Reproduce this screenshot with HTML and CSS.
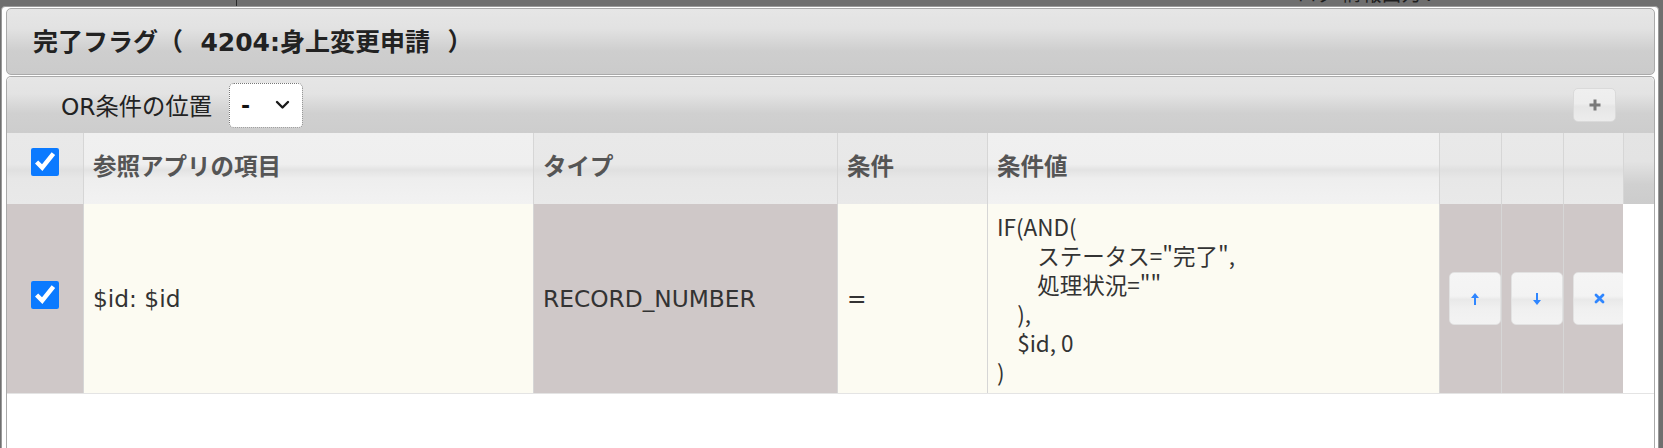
FILE: index.html
```html
<!DOCTYPE html>
<html lang="ja">
<head>
    <meta charset="UTF-8">
    <meta name="viewport" content="width=device-width, initial-scale=1.0">
    <title>完了フラグ</title>
    <link rel="stylesheet" href="styles.css">
</head>
<body>
    <!-- page behind the modal overlay -->
    <div class="backdrop">
        <div class="backdrop-side"></div>
        <div class="backdrop-main">
            <span class="backdrop-text">ログ 情報出力 :</span>
        </div>
    </div>

    <div class="dialog">
        <div class="dialog-titlebar">
            <span class="dialog-title">完了フラグ（&nbsp; 4204:身上変更申請 &nbsp;）</span>
        </div>

        <div class="dialog-content">
            <div class="toolbar">
                <span class="or-label">OR条件の位置</span>
                <div class="or-select">
                    <span>-</span>
                    <svg width="15" height="10" viewBox="0 0 15 10">
                        <polyline points="2,2 7.5,7.5 13,2" fill="none" stroke="#1a1a1a" stroke-width="2.4" stroke-linecap="round" stroke-linejoin="round"/>
                    </svg>
                </div>
                <button class="add-btn" type="button">
                    <svg width="14" height="14" viewBox="0 0 14 14">
                        <path d="M7 1.5v11M1.5 7h11" stroke="#7a7a7a" stroke-width="3"/>
                    </svg>
                </button>
            </div>

            <div class="grid-row grid-head">
                <div class="cell cell-check shade"><input type="checkbox" checked></div>
                <div class="cell light">参照アプリの項目</div>
                <div class="cell shade">タイプ</div>
                <div class="cell shade">条件</div>
                <div class="cell light">条件値</div>
                <div class="cell shade"></div>
                <div class="cell shade"></div>
                <div class="cell shade"></div>
                <div class="cell gutter"></div>
            </div>

            <div class="grid-row grid-body">
                <div class="cell cell-check ro"><input type="checkbox" checked></div>
                <div class="cell ed">$id: $id</div>
                <div class="cell ro">RECORD_NUMBER</div>
                <div class="cell ed">=</div>
                <div class="cell ed formula"><pre>IF(AND(
        ステータス="完了",
        処理状況=""
    ),
    $id, 0
)</pre></div>
                <div class="cell ro cell-btn">
                    <button class="row-btn" type="button" title="上へ">
                        <svg width="10" height="14" viewBox="0 0 10 14">
                            <path d="M5 1L1 6h3v7h2V6h3z" fill="#2f86ff"/>
                        </svg>
                    </button>
                </div>
                <div class="cell ro cell-btn">
                    <button class="row-btn" type="button" title="下へ">
                        <svg width="10" height="14" viewBox="0 0 10 14">
                            <path d="M5 13L1 8h3V1h2v7h3z" fill="#2f86ff"/>
                        </svg>
                    </button>
                </div>
                <div class="cell ro cell-btn">
                    <button class="row-btn" type="button" title="削除">
                        <svg width="11" height="11" viewBox="0 0 11 11">
                            <path d="M2 2l7 7M9 2l-7 7" stroke="#2f86ff" stroke-width="2.8" stroke-linecap="round"/>
                        </svg>
                    </button>
                </div>
                <div class="cell gutter-body"></div>
            </div>
        </div>
    </div>
</body>
</html>
```

FILE: styles.css
```css
body {
    margin: 0;
    height: 448px;
    overflow: hidden;
    background-color: #6f6f6f;
    font-family: "DejaVu Sans", "Noto Sans CJK JP", sans-serif;
    font-size: 23.3px;
    color: #333;
}

/* dimmed page behind the dialog */
.backdrop {
    display: flex;
    height: 6px;
    overflow: hidden;
}

.backdrop-side {
    width: 236px;
    border-right: 1px solid #2a2a2a;
}

.backdrop-main {
    flex: 1;
    padding-left: 1060px;
}

.backdrop-text {
    display: block;
    margin-top: -17px;
    font-family: "Noto Sans CJK JP", sans-serif;
    font-size: 20px;
    line-height: 20px;
    color: #1f1f1f;
}

/* modal dialog */
.dialog {
    position: absolute;
    top: 6px;
    left: 1px;
    width: 1658px;
    height: 460px;
    box-sizing: border-box;
    padding: 1px 3px 0 4px;
    background: #fff;
    border: 1px solid #9a9a9a;
    border-radius: 4px;
}

.dialog-titlebar {
    display: flex;
    align-items: center;
    height: 67px;
    box-sizing: border-box;
    padding: 0 0 4px 26px;
    border: 1px solid #aaa;
    border-radius: 5px;
    background: linear-gradient(#e6e6e6 0%, #e2e2e2 30%, #cecece 65%, #cbcbcb 100%);
}

.dialog-title {
    font-size: 25px;
    font-weight: bold;
    color: #222;
}

.dialog-content {
    margin-top: 1px;
    height: 380px;
    border: 1px solid #aaa;
    border-bottom: none;
    border-radius: 5px 5px 0 0;
}

.toolbar {
    display: flex;
    align-items: center;
    height: 56px;
    padding-left: 54px;
    padding-right: 38px;
    background: linear-gradient(#e6e6e6 0%, #e3e3e3 30%, #d0d0d0 65%, #cdcdcd 100%);
    border-radius: 5px 5px 0 0;
}

.or-label {
    color: #222;
}

.or-select {
    display: flex;
    align-items: center;
    justify-content: space-between;
    width: 74px;
    height: 45px;
    box-sizing: border-box;
    margin-left: 17px;
    padding: 0 12px 0 11px;
    background: #fff;
    border: 1px dotted #777;
    border-radius: 5px;
    font-size: 22px;
    font-weight: bold;
    color: #111;
}

.add-btn {
    display: flex;
    align-items: center;
    justify-content: center;
    width: 43px;
    height: 34px;
    margin-left: auto;
    padding: 0;
    background: linear-gradient(#efefef 0%, #ededed 45%, #e6e6e6 55%, #ececec 100%);
    border: 1px solid #dadada;
    border-radius: 5px;
}

/* grid of conditions */
.grid-row {
    display: grid;
    grid-template-columns: 76px 450px 304px 150px 452px 62px 62px 60px 31px;
}

.cell {
    box-sizing: border-box;
    display: flex;
    align-items: center;
    padding-left: 9px;
    border-left: 1px solid #d6d6d6;
    overflow: hidden;
}

.cell:first-child {
    border-left: none;
}

.cell-check {
    justify-content: center;
    padding-left: 0;
}

.cell-check input {
    width: 28px;
    height: 28px;
    margin: 0 0 6px 0;
    accent-color: #0b7aff;
}

.grid-head {
    height: 71px;
}

.grid-head .cell {
    padding-bottom: 8px;
    font-size: 23.5px;
    font-weight: bold;
    color: #555;
}

.grid-head .light {
    background: linear-gradient(#f0f0f0 0%, #efefef 44%, #e3e3e3 52%, #eeeeee 64%, #f2f2f2 100%);
}

.grid-head .shade {
    background: linear-gradient(#e9e9e9 0%, #e8e8e8 44%, #e0e0e0 52%, #e7e7e7 64%, #e9e9e9 100%);
}

.grid-head .gutter {
    background: linear-gradient(#e4e4e4 0%, #e3e3e3 40%, #d0d0d0 72%, #cccccc 100%);
}

.grid-body {
    height: 189px;
    border-bottom: 1px solid #e4e4e4;
}

.grid-body .ro {
    background: #cfc8c8;
}

.grid-body .ed {
    background: #fcfbf2;
}

.grid-body .gutter-body {
    background: #fff;
    border-left: none;
}

.grid-body .cell-check input {
    margin-bottom: 8px;
}

.formula pre {
    margin: 0;
    font-family: "Noto Sans CJK JP", sans-serif;
    font-size: 22.5px;
    line-height: 29px;
    color: #333;
}

.cell-btn {
    padding-left: 9px;
}

.row-btn {
    display: flex;
    align-items: center;
    justify-content: center;
    flex: none;
    width: 52px;
    height: 53px;
    padding: 0;
    background: linear-gradient(#f5f5f5 0%, #f3f3f3 45%, #e9e9e9 52%, #f0f0f0 70%, #f3f3f3 100%);
    border: 1px solid #e2e2e2;
    border-radius: 5px;
}
```
